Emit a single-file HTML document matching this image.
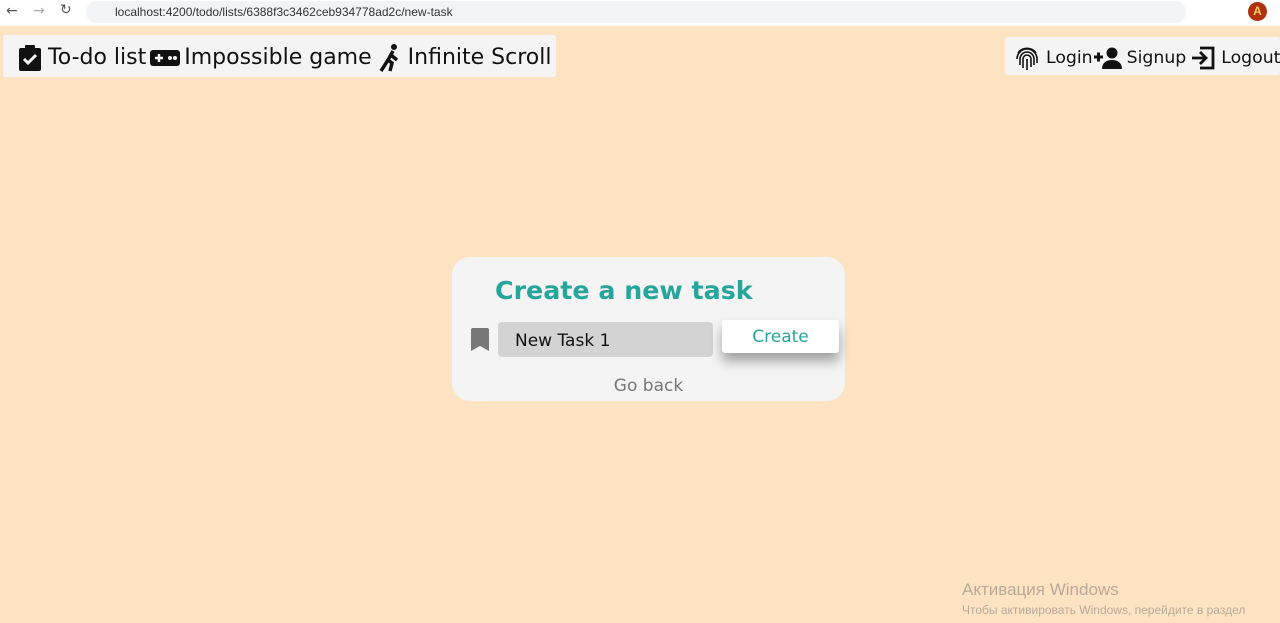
<!DOCTYPE html>
<html><head><meta charset="utf-8"><style>
*{box-sizing:border-box;margin:0;padding:0}
body{width:1280px;height:623px;overflow:hidden;background:#fee3c3;font-family:"DejaVu Sans","Liberation Sans",sans-serif;position:relative}
.chrome{position:absolute;left:0;top:0;width:1280px;height:26px;background:#fff}
.url{position:absolute;left:86px;top:1px;width:1100px;height:22px;background:#f1f3f4;border-radius:11px;font:12px "Liberation Sans",sans-serif;color:#333;padding:4px 0 0 29px}
.nav{position:absolute;top:35px;height:42px;background:#f4f4f4;border-radius:3px;display:flex;align-items:center;font-size:22px;color:#111;white-space:nowrap;overflow:hidden;padding-top:3px}
.nav svg{display:inline-block;vertical-align:middle;flex-shrink:0}
.nav span{flex-shrink:0}
.card{position:absolute;left:452px;top:257px;width:393px;height:144px;background:#f4f4f4;border-radius:18px}
h1{position:absolute;left:43px;top:19px;font-size:25.3px;font-weight:bold;color:#26a69a;white-space:nowrap}
.inp{position:absolute;left:46px;top:65px;width:215px;height:35px;background:#d3d3d3;border-radius:4px;font-size:17px;padding:9px 0 0 17px;color:#111}
.btn{position:absolute;left:270px;top:63px;width:117px;height:33px;background:#fff;border-radius:3px;box-shadow:0 8px 12px rgba(0,0,0,.35);color:#26a69a;font-size:17px;text-align:center;line-height:35px}
.back{position:absolute;left:0;width:393px;top:119px;text-align:center;color:#777;font-size:17px}
.wm{position:absolute;left:962px;color:#b8aa98;font-family:"Liberation Sans",sans-serif}
</style></head><body>
<div class="chrome">
<span style="position:absolute;left:6px;top:3px;font-size:14px;color:#555">←</span>
<span style="position:absolute;left:33px;top:3px;font-size:14px;color:#aaa">→</span>
<span style="position:absolute;left:60px;top:2px;font-size:14px;color:#555">↻</span>
<div class="url">localhost:4200/todo/lists/6388f3c3462ceb934778ad2c/new-task</div>
<div style="position:absolute;left:1248px;top:2px;width:19px;height:19px;border-radius:50%;background:#b03010;color:#fc6;font:bold 12px sans-serif;text-align:center;line-height:19px">A</div>
</div>
<div class="nav" style="left:3px;width:553px;padding-left:15px">
<svg width="24" height="26" viewBox="0 0 24 26"><rect x="1" y="3" width="22" height="23" rx="2" fill="#111"/><rect x="7" y="0" width="10" height="6" rx="1" fill="#111"/><path d="M6 14l4 4 8-8" stroke="#f4f4f4" stroke-width="3" fill="none"/></svg>
<span style="margin-left:6px">To-do list</span>
<svg width="30" height="18" viewBox="0 0 30 18" style="margin-left:4px"><rect x="0" y="1" width="30" height="16" rx="3" fill="#111"/><path d="M5 9h8M9 5v8" stroke="#f4f4f4" stroke-width="2.5"/><circle cx="20" cy="9" r="2" fill="#f4f4f4"/><circle cx="25" cy="9" r="2" fill="#f4f4f4"/></svg>
<span style="margin-left:4px">Impossible game</span>
<svg width="24" height="28" viewBox="0 0 24 28" style="margin-left:7px"><circle cx="15" cy="3" r="3" fill="#111"/><path d="M14 7l-5 9 4 3-2 8M12 11l6 5M9 16l-7 11" stroke="#111" stroke-width="3.5" fill="none"/></svg>
<span style="margin-left:5px">Infinite Scroll</span>
</div>
<div class="nav" style="left:1005px;width:275px;top:37px;height:38px;padding-left:10px;font-size:17.3px">
<svg width="24" height="26" viewBox="0 0 24 26" fill="none" stroke="#111" stroke-width="1.6"><path d="M3 8a11 11 0 0 1 18 0M2 14a10 10 0 0 1 20 0v4M5 20v-6a7 7 0 0 1 14 0v6M8 23v-9a4 4 0 0 1 8 0v8M12 14v11"/></svg>
<span style="margin-left:7px">Login</span>
<svg width="30" height="22" viewBox="0 0 30 22"><path d="M1 10h9M5.5 5.5v9" stroke="#111" stroke-width="3"/><circle cx="19" cy="6" r="5.5" fill="#111"/><path d="M9 22c0-6 4-9 10-9s10 3 10 9z" fill="#111"/></svg>
<span style="margin-left:4px">Signup</span>
<svg width="26" height="24" viewBox="0 0 26 24" fill="none" stroke="#111" stroke-width="2.8" style="margin-left:4px"><path d="M10 2h13v20H10M2 12h13M10 6l6 6-6 6"/></svg>
<span style="margin-left:5px">Logout</span>
</div>
<div class="card">
<h1>Create a new task</h1>
<svg style="position:absolute;left:19px;top:71px" width="18" height="23" viewBox="0 0 18 23"><path d="M0 2a2 2 0 0 1 2-2h14a2 2 0 0 1 2 2v21l-9-5-9 5z" fill="#777"/></svg>
<div class="inp">New Task 1</div>
<div class="btn">Create</div>
<div class="back">Go back</div>
</div>
<div class="wm" style="top:580px;font-size:17px">Активация Windows</div>
<div class="wm" style="top:603px;font-size:12px">Чтобы активировать Windows, перейдите в раздел</div>
</body></html>
